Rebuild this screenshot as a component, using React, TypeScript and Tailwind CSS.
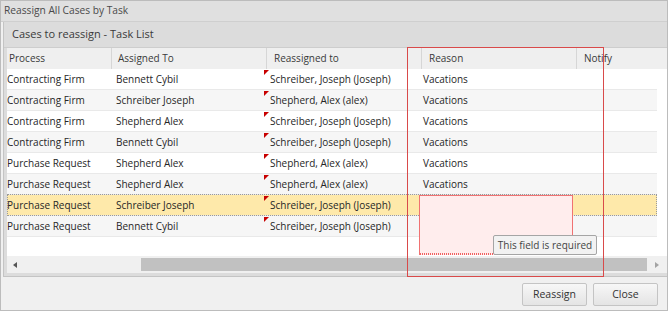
import React from 'react';

type Row = { process: string; assigned: string; reassigned: string; reason: string };

const ROWS: Row[] = [
  { process: 'Contracting Firm', assigned: 'Bennett Cybil', reassigned: 'Schreiber, Joseph (Joseph)', reason: 'Vacations' },
  { process: 'Contracting Firm', assigned: 'Schreiber Joseph', reassigned: 'Shepherd, Alex (alex)', reason: 'Vacations' },
  { process: 'Contracting Firm', assigned: 'Shepherd Alex', reassigned: 'Schreiber, Joseph (Joseph)', reason: 'Vacations' },
  { process: 'Contracting Firm', assigned: 'Bennett Cybil', reassigned: 'Schreiber, Joseph (Joseph)', reason: 'Vacations' },
  { process: 'Purchase Request', assigned: 'Shepherd Alex', reassigned: 'Shepherd, Alex (alex)', reason: 'Vacations' },
  { process: 'Purchase Request', assigned: 'Shepherd Alex', reassigned: 'Shepherd, Alex (alex)', reason: 'Vacations' },
  { process: 'Purchase Request', assigned: 'Schreiber Joseph', reassigned: 'Schreiber, Joseph (Joseph)', reason: '' },
  { process: 'Purchase Request', assigned: 'Bennett Cybil', reassigned: 'Schreiber, Joseph (Joseph)', reason: '' },
];

const SELECTED = 6;

function DirtyMark() {
  return (
    <span className="absolute left-0 top-px h-0 w-0 border-r-[5px] border-t-[5px] border-r-transparent border-t-[#c80000]" />
  );
}

export default function App() {
  return (
    <div className="relative flex h-[311px] w-[668px] flex-col border border-[#bcbcbc] bg-[#f0f0f0] font-['Open_Sans',sans-serif] text-[10px] text-[#333]">
      {/* window title */}
      <div className="flex h-[21px] shrink-0 items-center border-b border-[#cfcfcf] bg-[#e0e0e0] pl-[3px] text-[10.2px] text-[#4a4a4a]">
        Reassign All Cases by Task
      </div>

      {/* grid panel */}
      <div className="ml-[2px] flex flex-col border-b border-l border-[#c4c4c4] bg-[#dcdcdc]">
        <div className="flex h-[26px] items-center border-b border-[#cdcdcd] pl-[8px] text-[11px] text-[#3a3a3a]">
          Cases to reassign - Task List
        </div>

        <div className="flex flex-col pb-[3px] pl-[3px]">
          {/* column headers */}
          <div className="flex h-[21px] bg-[#efefef] text-[#3a3a3a]">
            <div className="flex w-[105px] items-center border-r border-[#d6d6d6] pl-[2px]">Process</div>
            <div className="flex w-[155px] items-center border-r border-[#d6d6d6] pl-[6px]">Assigned To</div>
            <div className="flex w-[155px] items-center border-r border-[#d6d6d6] pl-[7px]">Reassigned to</div>
            <div className="flex w-[155px] items-center border-r border-[#d6d6d6] pl-[7px]">Reason</div>
            <div className="flex flex-1 items-center pl-[7px]">Notify</div>
          </div>

          {/* rows */}
          <div className="relative flex h-[187px] flex-col bg-white">
            {ROWS.map((r, i) => {
              const selected = i === SELECTED;
              const bg = selected ? 'bg-[#fee9aa]' : i % 2 === 0 ? 'bg-white' : 'bg-[#f6f6f6]';
              return (
                <div
                  key={i}
                  className={`relative flex h-[21px] w-[650px] shrink-0 border-b border-[#e9e9e9] text-[#262626] ${bg}`}
                >
                  {selected && (
                    <span className="pointer-events-none absolute inset-x-0 -top-px bottom-[-1px] border border-dotted border-[#9a9a9a]" />
                  )}
                  <div className="flex w-[105px] items-center">{r.process}</div>
                  <div className="flex w-[152px] items-center pl-[4px]">{r.assigned}</div>
                  <div className="relative flex w-[155px] items-center pl-[6px]">
                    <DirtyMark />
                    {r.reassigned}
                  </div>
                  <div className="flex w-[154px] items-center pl-[4px]">{r.reason}</div>
                  <div className="flex-1" />
                </div>
              );
            })}
          </div>

          {/* horizontal scrollbar */}
          <div className="flex h-[17px] items-center bg-[#f0f0f0]">
            <div className="flex w-[134px] items-center pl-[6px]">
              <span className="h-0 w-0 border-y-[3px] border-r-[4px] border-y-transparent border-r-[#555]" />
            </div>
            <div className="h-[13px] w-[506px] bg-[#c1c1c1]" />
            <div className="flex flex-1 items-center pl-[8px]">
              <span className="h-0 w-0 border-y-[3px] border-l-[4px] border-y-transparent border-l-[#a3a3a3]" />
            </div>
          </div>
        </div>
      </div>

      {/* footer buttons */}
      <div className="flex flex-1 items-start justify-end gap-[6px] pr-[9px] pt-[6px]">
        <button className="h-[23px] w-[65px] rounded-[2px] border border-[#c4c4c4] bg-gradient-to-b from-[#f7f7f7] to-[#e4e4e4] pt-px text-[10.5px] text-[#333]">
          Reassign
        </button>
        <button className="h-[23px] w-[65px] rounded-[2px] border border-[#c4c4c4] bg-gradient-to-b from-[#f7f7f7] to-[#e4e4e4] pt-px text-[10.5px] text-[#333]">
          Close
        </button>
      </div>

      {/* cell editor (invalid) */}
      <div className="absolute left-[418px] top-[194px] h-[60px] w-[154px] border border-b-0 border-[#f07272] bg-[#ffeded]">
        <div className="absolute inset-x-0 bottom-0 h-[2px] bg-[repeating-linear-gradient(90deg,#f06060_0_1px,transparent_1px_2px)]" />
      </div>
      <div className="absolute left-[492px] top-[234px] flex h-[20px] w-[104px] items-center justify-center rounded-[2px] border border-[#a5a5a5] bg-[#f2f2f2] text-[10px] text-[#444]">
        This field is required
      </div>

      {/* highlight frame */}
      <div className="pointer-events-none absolute left-[406px] top-[46px] h-[230px] w-[197px] border border-[#d94a4a]" />
    </div>
  );
}
